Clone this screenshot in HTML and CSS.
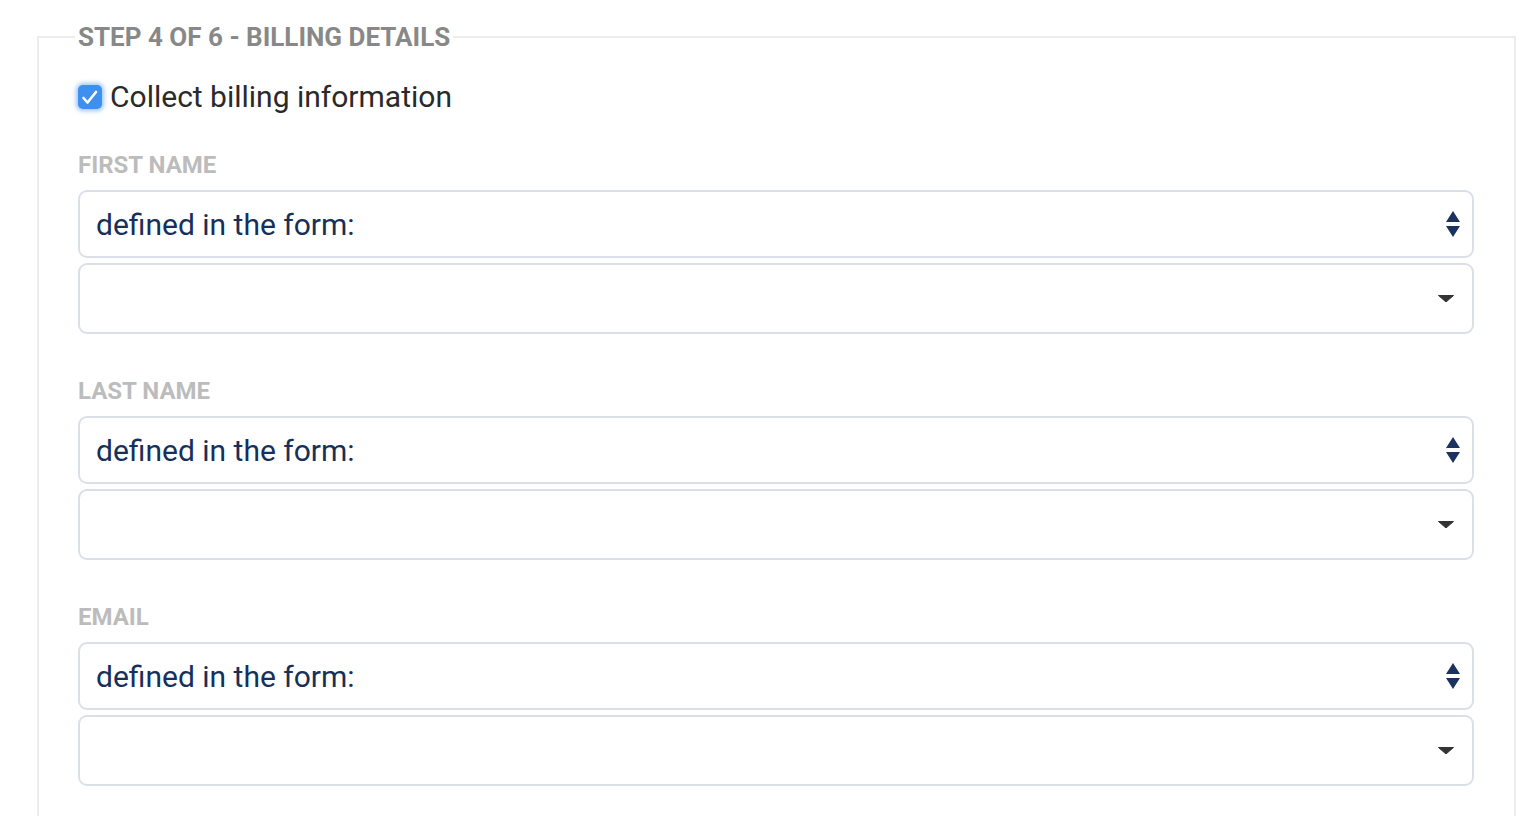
FILE: index.html
```html
<!DOCTYPE html>
<html>
<head>
<meta charset="utf-8">
<link rel="stylesheet" href="styles.css">
</head>
<body>
<fieldset class="step">
  <legend class="step-title">STEP 4 OF 6 - BILLING DETAILS</legend>
  <label class="check-row">
    <span class="checkbox"><svg viewBox="0 0 24 24" width="24" height="24"><path d="M5.5 13l4 4.5L18 7" fill="none" stroke="#fff" stroke-width="2.6" stroke-linecap="round" stroke-linejoin="round"/></svg></span>
    <span class="check-text">Collect billing information</span>
  </label>

  <div class="field">
    <div class="field-label">FIRST NAME</div>
    <div class="select primary"><span>defined in the form:</span><span class="updown"><svg viewBox="0 0 14 26" width="14" height="26"><path d="M7 0L14 11H0z M0 15H14L7 26z" fill="#1b335e"/></svg></span></div>
    <div class="select secondary"><span></span><span class="caret"><svg viewBox="0 0 16 7" width="16" height="7"><path d="M0.5 0.5H15.5L8 7z" fill="#333" stroke="#333" stroke-width="1" stroke-linejoin="round"/></svg></span></div>
  </div>

  <div class="field">
    <div class="field-label">LAST NAME</div>
    <div class="select primary"><span>defined in the form:</span><span class="updown"><svg viewBox="0 0 14 26" width="14" height="26"><path d="M7 0L14 11H0z M0 15H14L7 26z" fill="#1b335e"/></svg></span></div>
    <div class="select secondary"><span></span><span class="caret"><svg viewBox="0 0 16 7" width="16" height="7"><path d="M0.5 0.5H15.5L8 7z" fill="#333" stroke="#333" stroke-width="1" stroke-linejoin="round"/></svg></span></div>
  </div>

  <div class="field">
    <div class="field-label">EMAIL</div>
    <div class="select primary"><span>defined in the form:</span><span class="updown"><svg viewBox="0 0 14 26" width="14" height="26"><path d="M7 0L14 11H0z M0 15H14L7 26z" fill="#1b335e"/></svg></span></div>
    <div class="select secondary"><span></span><span class="caret"><svg viewBox="0 0 16 7" width="16" height="7"><path d="M0.5 0.5H15.5L8 7z" fill="#333" stroke="#333" stroke-width="1" stroke-linejoin="round"/></svg></span></div>
  </div>
</fieldset>
</body>
</html>
```

FILE: styles.css
```css
html, body {
  margin: 0;
  padding: 0;
  background: #fff;
  font-family: Roboto, "Liberation Sans", sans-serif;
  overflow: hidden;
}

.step {
  margin: 24px 18px 0 37px;
  padding: 31px 40px 60px 39px;
  border: 2px solid #ececec;
  border-bottom: none;
  min-height: 800px;
}

.step-title {
  padding: 0 3px;
  margin-left: -3px;
  font-size: 26px;
  line-height: 26px;
  font-weight: 700;
  color: #888;
}

.check-row {
  display: flex;
  align-items: center;
  gap: 8px;
  height: 32px;
  margin-bottom: 39px;
}

.checkbox {
  width: 24px;
  height: 24px;
  border-radius: 5px;
  background: #3d8ff0;
  box-shadow: 0 0 4px 2px rgba(61, 143, 240, 0.5);
  display: flex;
}

.check-text {
  font-size: 30px;
  line-height: 32px;
  color: #2a2a2a;
}

.field {
  margin-bottom: 44px;
}

.field-label {
  font-size: 24px;
  line-height: 26px;
  font-weight: 700;
  color: #bcbcbc;
  margin-bottom: 12px;
}

.select {
  display: flex;
  align-items: center;
  justify-content: space-between;
  border: 2px solid #dbdfe8;
  border-radius: 9px;
  box-sizing: border-box;
  padding: 0 12px 0 16px;
  font-size: 30px;
  color: #17305a;
}

.select.primary {
  height: 68px;
  margin-bottom: 5px;
}

.select.secondary {
  height: 71px;
  padding-right: 18px;
}

.updown, .caret {
  display: flex;
}
```
